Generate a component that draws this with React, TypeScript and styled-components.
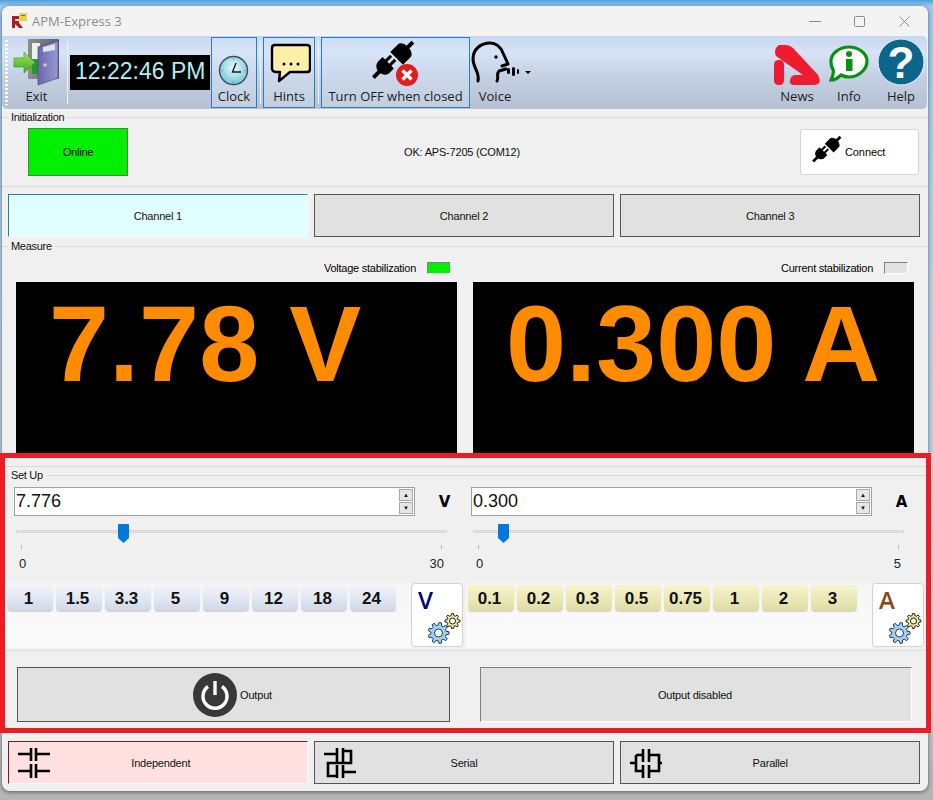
import styled, { createGlobalStyle } from 'styled-components'

const GlobalStyle = createGlobalStyle`
  html, body {
    margin: 0;
    padding: 0;
  }

  body {
    width: 933px;
    height: 800px;
    overflow: hidden;
    background: linear-gradient(180deg, #4f9fe0 0, #9cc8ea 6px, #b9d3e8 300px, #c4c8cc 700px, #b4b4b4 800px);
    font-family: 'Liberation Sans', Arial, sans-serif;
  }

  * {
    box-sizing: border-box;
  }
`

const Desktop = styled.div`
  position: relative;
  width: 933px;
  height: 800px;
  padding: 6px 0 0 2px;
`

const Window = styled.div`
  display: flex;
  flex-direction: column;
  width: 926px;
  height: 785px;
  background: #f0f0f0;
  border-radius: 8px;
  box-shadow: 0 1px 4px rgba(0, 0, 0, 0.5);
  overflow: hidden;
`

const TitleBar = styled.div`
  display: flex;
  align-items: center;
  flex: 0 0 30px;
  padding-left: 9px;
  background: #f3f3f3;
`

const AppTitle = styled.span`
  margin-left: 4px;
  font-family: 'Open Sans', sans-serif;
  font-size: 13px;
  color: #8c8c8c;
`

const WindowButtons = styled.div`
  display: flex;
  margin: 0 1px 0 auto;
`

const WindowButton = styled.div`
  display: flex;
  align-items: center;
  justify-content: center;
  width: 45px;
  height: 30px;
`

const Toolbar = styled.div`
  display: flex;
  align-items: stretch;
  flex: 0 0 73px;
  margin-right: 1px;
  padding: 1px 2px 1px 3px;
  border-radius: 0 5px 5px 5px;
  background: linear-gradient(180deg, #c6d6ef 0%, #d7e3f6 22%, #c6d0e4 55%, #b5c0d1 100%);
`

const Grip = styled.div`
  flex: 0 0 3px;
  margin: 3px 1px 3px 0;
  background: repeating-linear-gradient(180deg, #fff 0, #fff 2px, transparent 2px, transparent 4px);
`

const ToolItem = styled.div<{ $w: number; $active?: boolean }>`
  display: flex;
  flex-direction: column;
  align-items: center;
  flex: 0 0 ${(p) => p.$w}px;
  min-width: 0;
  border: 1px solid ${(p) => (p.$active ? '#2b7dbd' : 'transparent')};
  background: ${(p) => (p.$active ? 'rgba(214, 232, 250, 0.35)' : 'transparent')};
`

const ToolIcon = styled.div`
  display: flex;
  justify-content: center;
  flex: 0 0 48px;
`

const ToolLabel = styled.span`
  font-family: 'Open Sans', sans-serif;
  font-size: 13px;
  line-height: 21px;
  white-space: nowrap;
  color: #1c1c1c;
`

const VoiceLabel = styled(ToolLabel)`
  margin-right: 15px;
`

const ToolSeparator = styled.div`
  flex: 0 0 1px;
  margin: 4px 2px 4px 3px;
  background: #eef2f8;
`

const ClockDisplay = styled.div`
  align-self: flex-start;
  width: 140px;
  height: 35px;
  margin: 18px 1px 0 0;
  padding-left: 5px;
  background: #000;
  color: #aeeeee;
  font-size: 23px;
  line-height: 33px;
  white-space: nowrap;
`

const ToolbarRight = styled.div`
  display: flex;
  gap: 9px;
  margin-left: auto;
`

const Group = styled.fieldset<{ $lined?: boolean }>`
  min-width: 0;
  margin: 0;
  padding: 0;
  border: 0;
  border-top: 1px solid #d9d9d9;
  border-bottom: ${(p) => (p.$lined ? '1px solid #d9d9d9' : '0')};
`

const GroupLabel = styled.legend`
  margin-left: 6px;
  padding: 0 3px 0 3px;
  font-size: 11px;
  letter-spacing: -0.3px;
  line-height: 14px;
  color: #111;
`

const InitGroup = styled(Group)`
  margin-top: 1px;
`

const InitRow = styled.div`
  display: flex;
  align-items: center;
  height: 62px;
  padding: 4px 9px 10px 26px;
`

const OnlineBox = styled.div`
  display: flex;
  align-items: center;
  justify-content: center;
  width: 100px;
  height: 48px;
  border: 1px solid #3e8b3e;
  background: #00f000;
  font-size: 11px;
  letter-spacing: -0.2px;
`

const StatusText = styled.div`
  flex: 1;
  padding-right: 4px;
  text-align: center;
  font-size: 11px;
  letter-spacing: -0.2px;
  color: #111;
`

const ConnectButton = styled.div`
  display: flex;
  align-items: center;
  gap: 1px;
  width: 119px;
  height: 46px;
  padding-left: 7px;
  border: 1px solid #d4d4d4;
  border-radius: 3px;
  background: #fff;
  font-size: 11px;
  letter-spacing: -0.1px;
`

const ModeRow = styled.div<{ $top: number }>`
  display: grid;
  grid-template-columns: repeat(3, 1fr);
  gap: 6.5px;
  height: 43px;
  margin: ${(p) => p.$top}px 8px 0 6px;
`

const ModeButton = styled.div<{ $on?: string; $edge?: string; $shift?: number }>`
  position: relative;
  display: flex;
  align-items: center;
  justify-content: center;
  padding-left: ${(p) => p.$shift ?? 0}px;
  border: 1px solid #555;
  background: #e1e1e1;
  font-size: 11px;
  letter-spacing: -0.2px;
  color: #111;

  ${(p) =>
    p.$on &&
    `
    background: ${p.$on};
    border-color: ${p.$edge} #f8f8f8 #f8f8f8 ${p.$edge};
  `}
`

const ModeIcon = styled.svg`
  position: absolute;
  left: 6px;
  top: 2px;
`

const MeasureGroup = styled(Group)`
  margin-top: 2px;
`

const MeasureGrid = styled.div`
  display: grid;
  grid-template-columns: repeat(2, 441px);
  gap: 16px;
  padding: 0 0 10px 14px;
  border-bottom: 1px solid #d9d9d9;
`

const StabRow = styled.div`
  display: flex;
  align-items: center;
  justify-content: flex-end;
  gap: 11px;
  height: 29px;
  padding: 1px 6px 0 0;
  font-size: 11px;
  letter-spacing: -0.25px;
`

const StabLamp = styled.div<{ $on?: boolean }>`
  width: 24px;
  height: 12px;
  border: 1px solid;
  border-color: #808080 #fff #fff #808080;
  background: ${(p) => (p.$on ? '#00f000' : '#e1e1e1')};
`

const Readout = styled.div`
  height: 174px;
  padding: 2px 0 0 33px;
  background: #000;
  color: #ff8c00;
  font-size: 108px;
  font-weight: 700;
  line-height: 120px;
  white-space: nowrap;
`

const SetupGroup = styled(Group)`
  margin-top: 1px;
`

const SetupGrid = styled.div`
  display: grid;
  grid-template-columns: repeat(2, 457px);
  padding-left: 12px;
`

const SetupColumn = styled.div`
  padding-top: 5px;
`

const InputRow = styled.div`
  display: flex;
  align-items: center;
`

const NumberInput = styled.div`
  display: flex;
  align-items: center;
  justify-content: space-between;
  flex: 0 0 401px;
  height: 29px;
  padding: 0 1px 0 1px;
  border: 1px solid #a0a0a0;
  background: #fff;
  font-size: 18px;
  color: #111;
`

const Spinner = styled.div`
  display: flex;
  flex-direction: column;
  gap: 1px;
  width: 14px;
`

const SpinButton = styled.div`
  display: flex;
  align-items: center;
  justify-content: center;
  height: 12px;
  border: 1px solid #a8a8a8;
  background: #e6e6e6;
  font-size: 6px;
  line-height: 1;
  color: #111;
`

const UnitLabel = styled.span`
  flex: 0 0 56px;
  padding-left: 3px;
  text-align: center;
  font-family: 'DejaVu Sans', sans-serif;
  font-size: 15px;
  font-weight: 700;
`

const SliderBlock = styled.div`
  position: relative;
  width: 431px;
  height: 67px;
  margin-left: 2px;
`

const SliderTrack = styled.div`
  position: absolute;
  top: 14px;
  left: 0;
  right: 0;
  height: 3px;
  background: #e4e4e4;
  border: 1px solid #d8d8d8;
`

const SliderThumb = styled.svg<{ $left: number }>`
  position: absolute;
  top: 8px;
  left: ${(p) => p.$left}px;
`

const SliderTicks = styled.div`
  display: flex;
  justify-content: space-between;
  padding: 29px 5px 0 5px;
`

const Tick = styled.div`
  width: 1px;
  height: 4px;
  background: #b8b8b8;
`

const SliderScale = styled.div`
  display: flex;
  justify-content: space-between;
  margin-top: 7px;
  padding: 0 3px 0 3px;
  font-size: 13px;
  line-height: 15px;
  color: #222;
`

const PresetGrid = styled.div`
  display: grid;
  grid-template-columns: repeat(2, 458px);
  gap: 3px;
  padding-left: 3px;
`

const PresetCell = styled.div`
  display: flex;
  height: 65px;
`

const PresetStrip = styled.div`
  display: flex;
  align-items: flex-start;
  gap: 3px;
  flex: 1;
  padding: 2px 0 0 2px;
  background: linear-gradient(180deg, #f6f6f6, #fafafa);
`

const PresetButton = styled.div<{ $amber?: boolean }>`
  display: flex;
  align-items: center;
  justify-content: center;
  width: 46px;
  height: 26px;
  padding: 1px 3px 0 0;
  border-radius: 4px;
  background: ${(p) =>
    p.$amber
      ? 'linear-gradient(180deg, #f6f4cc 0%, #e9e7b4 60%, #dcdba2 100%)'
      : 'linear-gradient(180deg, #f1f4f9 0%, #dfe5f0 60%, #ced7e6 100%)'};
  box-shadow: 0 1px 1px #d0d0d0;
  font-size: 17px;
  font-weight: 700;
  color: #111;
`

const UnitSettings = styled.div`
  display: flex;
  flex-direction: column;
  flex: 0 0 52px;
  height: 64px;
  padding: 1px 0 0 6px;
  border: 1px solid #d2d2d2;
  border-radius: 4px;
  background: #fff;
`

const UnitLetter = styled.span<{ $color: string }>`
  font-family: 'Open Sans', sans-serif;
  font-size: 24px;
  font-weight: 600;
  line-height: 30px;
  color: ${(p) => p.$color};
`

const UnitGears = styled.svg`
  margin: -3px 0 0 10px;
`

const OutputRow = styled.div`
  display: grid;
  grid-template-columns: 433px 432px;
  gap: 30px;
  margin-top: 2px;
  padding: 16px 0 0 15px;
  border-top: 1px solid #dedede;
`

const OutputButton = styled.div`
  display: flex;
  align-items: center;
  justify-content: center;
  gap: 3px;
  height: 55px;
  padding-right: 2px;
  border: 1px solid #555;
  background: #e1e1e1;
  font-size: 11px;
  letter-spacing: -0.2px;
  color: #111;
`

const OutputState = styled(OutputButton)`
  border-color: #808080 #fff #fff #808080;
`

// red annotation frame that lies over the window
const Highlight = styled.div`
  position: absolute;
  left: 0;
  top: 453px;
  width: 931px;
  height: 280px;
  border: 5px solid #ed1c24;
  pointer-events: none;
`

// builds a cog outline around cx, cy
const gearPath = (cx: number, cy: number, r: number, teeth: number) => {
  const inner = r * 0.74
  const step = (Math.PI * 2) / teeth
  let d = ''
  for (let i = 0; i < teeth; i++) {
    const a = i * step
    const pts = [
      [inner, a - step * 0.32],
      [r, a - step * 0.17],
      [r, a + step * 0.17],
      [inner, a + step * 0.32],
    ]
    pts.forEach(([rad, ang], j) => {
      const x = (cx + rad * Math.cos(ang)).toFixed(2)
      const y = (cy + rad * Math.sin(ang)).toFixed(2)
      d += `${i === 0 && j === 0 ? 'M' : 'L'}${x} ${y} `
    })
  }
  return d + 'Z'
}

const Gears = () => (
  <UnitGears width="34" height="34" viewBox="0 0 34 34">
    <path d={gearPath(24.5, 9, 7.5, 8)} fill="#efe69c" stroke="#222" strokeWidth="1" />
    <circle cx="24.5" cy="9" r="3" fill="#fff" stroke="#222" strokeWidth="1" />
    <path d={gearPath(10.5, 21, 10.5, 9)} fill="#9fd0f2" stroke="#1d3c5c" strokeWidth="1" />
    <circle cx="10.5" cy="21" r="4" fill="#fff" stroke="#1d3c5c" strokeWidth="1" />
  </UnitGears>
)

const PlugPair = () => (
  <>
    <g transform="translate(383 67) rotate(45)">
      <rect x="-4.4" y="-13" width="3" height="8" fill="#000" />
      <rect x="1.4" y="-13" width="3" height="8" fill="#000" />
      <path d="M-8-6H8V0C8 5 3 7 2 7V15H-2V7C-3 7-8 5-8 0Z" fill="#000" />
    </g>
    <g transform="translate(402 52) rotate(45)">
      <path d="M-9 9H9V-2C9-5 4-7 2-7V-14H-2V-7C-4-7-9-5-9-2Z" fill="#000" />
    </g>
  </>
)

const ExitIcon = () => (
  <svg width="54" height="48" viewBox="10 38 54 48">
    <defs>
      <linearGradient id="doorFrame" x1="0" x2="1">
        <stop offset="0" stopColor="#8d8d8d" />
        <stop offset="1" stopColor="#5f6168" />
      </linearGradient>
      <linearGradient id="door" x1="0" x2="1">
        <stop offset="0" stopColor="#6a68ad" />
        <stop offset="1" stopColor="#9a98d0" />
      </linearGradient>
      <linearGradient id="arrowFill" x1="0" y1="0" x2="0" y2="1">
        <stop offset="0" stopColor="#a6ea5a" />
        <stop offset="1" stopColor="#3fa326" />
      </linearGradient>
    </defs>
    <rect x="28" y="39" width="31" height="40" rx="1" fill="url(#doorFrame)" />
    <rect x="32" y="43" width="8" height="16" fill="#e8f4ee" />
    <rect x="32" y="59" width="8" height="15" fill="#1f9a2c" />
    <polygon points="38,47 58,41 58,78 38,85" fill="url(#door)" stroke="#4a4880" strokeWidth="0.7" />
    <polygon points="43,47 55,44 55,50 43,52" fill="#dfe3f6" />
    <circle cx="45" cy="65" r="1.8" fill="#c8c8c8" />
    <polygon
      points="14,58 24,58 24,52 35,62.5 24,73 24,67 14,67"
      fill="url(#arrowFill)"
      stroke="#4f9a2a"
      strokeWidth="0.7"
    />
  </svg>
)

const ClockIcon = () => (
  <svg width="38" height="48" viewBox="215 38 38 48">
    <defs>
      <radialGradient id="clockFace" cx="0.5" cy="0.4" r="0.7">
        <stop offset="0" stopColor="#e8fbfb" />
        <stop offset="1" stopColor="#5fbdd0" />
      </radialGradient>
    </defs>
    <circle cx="233.5" cy="70.5" r="14" fill="url(#clockFace)" stroke="#33505c" strokeWidth="1.4" />
    <path d="M236 63 L232.5 72 L241 72" fill="none" stroke="#1a1a1a" strokeWidth="1.4" />
    <circle cx="233.5" cy="59" r="0.8" fill="#d07070" />
    <circle cx="233.5" cy="82" r="0.8" fill="#d07070" />
    <circle cx="222" cy="70.5" r="0.8" fill="#d07070" />
    <circle cx="245" cy="70.5" r="0.8" fill="#d07070" />
  </svg>
)

const HintsIcon = () => (
  <svg width="44" height="48" viewBox="267 38 44 48">
    <path
      d="M275 45H307Q310 45 310 48V69Q310 72 307 72H290L279 81L280 72H276Q272 72 272 68V48Q272 45 275 45Z"
      fill="#fdf0a6"
      stroke="#000"
      strokeWidth="2.4"
      strokeLinejoin="round"
    />
    <circle cx="284" cy="64" r="1.5" fill="#000" />
    <circle cx="291" cy="64" r="1.5" fill="#000" />
    <circle cx="298" cy="64" r="1.5" fill="#000" />
  </svg>
)

const TurnOffIcon = () => (
  <svg width="60" height="48" viewBox="365 38 60 48">
    <PlugPair />
    <circle cx="406" cy="75" r="11" fill="#e21b1b" />
    <path d="M401.5 70.5L410.5 79.5M410.5 70.5L401.5 79.5" stroke="#fff" strokeWidth="3.4" />
  </svg>
)

const VoiceIcon = () => (
  <svg width="63" height="48" viewBox="471 38 63 48">
    <g fill="none" stroke="#000" strokeWidth="3" strokeLinecap="round" strokeLinejoin="round">
      <path d="M478 81C480 72 473 68 473 59C473 49 481 43 490 43C497 43 501 48 503 53L508 64L502 66" />
      <path d="M506 69L499 71C496 74 499 77 497 81" />
    </g>
    <circle cx="496" cy="57" r="1.7" fill="#000" />
    <rect x="507" y="68" width="3" height="6" rx="1.5" fill="#000" />
    <rect x="512" y="67" width="3" height="9" rx="1.5" fill="#000" />
    <rect x="517" y="69" width="2" height="5" rx="1" fill="#000" />
    <polygon points="525,71 531,71 528,74" fill="#000" />
  </svg>
)

const NewsIcon = () => (
  <svg width="48" height="48" viewBox="773 38 48 48">
    <path
      d="M779 45H786Q790 45 793 48L818 75Q823 85 814 85H794Q789 85 790 80Q791 75 796 75H803L776 56Q773 49 779 45Z"
      fill="#ee1c2e"
    />
    <rect x="774" y="60" width="10" height="25" rx="4.5" fill="#ee1c2e" />
  </svg>
)

const InfoIcon = () => (
  <svg width="40" height="48" viewBox="829 38 40 48">
    <path
      d="M849 47C858 47 867 53 867 61C867 70 858 77 849 77C845 77 843 76 841 75C838 78 835 80 831 80C833 76 834 72 833 69C831 67 831 64 831 61C831 53 840 47 849 47Z"
      fill="#fff"
      stroke="#0a8f12"
      strokeWidth="3.2"
    />
    <circle cx="849" cy="54" r="3" fill="#0a8f12" />
    <rect x="846" y="59" width="6.5" height="12" fill="#0a8f12" />
  </svg>
)

const HelpIcon = () => (
  <svg width="48" height="48" viewBox="877 39 48 48">
    <circle cx="901" cy="63" r="23" fill="#0b668c" stroke="#e8eef4" strokeWidth="1" />
    <text x="901" y="79" textAnchor="middle" fontFamily="Liberation Sans" fontWeight="700" fontSize="44" fill="#fff">
      ?
    </text>
  </svg>
)

const AppIcon = () => (
  <svg width="17" height="16" viewBox="0 0 17 16">
    <rect x="8" y="0" width="8" height="8" fill="#e8d24a" />
    <rect x="10" y="2" width="4" height="1" fill="#4a7a3a" />
    <path d="M1 3H8V6H4V8H8V10L12 15H8L4 11V15H1Z" fill="#b01c20" />
  </svg>
)

const IndependentIcon = () => (
  <ModeIcon width="44" height="36" viewBox="15 744 44 36">
    <path
      d="M18 754H31M31 748V761M36 748V761M36 754H50M18 771H31M31 764V778M36 764V778M36 771H50"
      fill="none"
      stroke="#000"
      strokeWidth="2.6"
    />
  </ModeIcon>
)

const SerialIcon = () => (
  <ModeIcon width="44" height="36" viewBox="321 744 44 36">
    <path
      d="M324 754H337M337 748V762M343 748V762M343 751H351V763H328V776H337M337 765V778M343 765V778M343 772H356"
      fill="none"
      stroke="#000"
      strokeWidth="2.6"
    />
  </ModeIcon>
)

const ParallelIcon = () => (
  <ModeIcon width="44" height="36" viewBox="627 744 44 36">
    <path
      d="M630 763H636M636 755V771H643M636 755H643M643 749V762M643 765V778M649 749V762M649 765V778M649 755H659V771H649M659 763H662"
      fill="none"
      stroke="#000"
      strokeWidth="2.6"
    />
  </ModeIcon>
)

const voltPresets = ['1', '1.5', '3.3', '5', '9', '12', '18', '24']
const ampPresets = ['0.1', '0.2', '0.3', '0.5', '0.75', '1', '2', '3']

const SetupChannel = ({
  value,
  unit,
  max,
  thumbLeft,
}: {
  value: string
  unit: string
  max: string
  thumbLeft: number
}) => (
  <SetupColumn>
    <InputRow>
      <NumberInput>
        {value}
        <Spinner>
          <SpinButton>▲</SpinButton>
          <SpinButton>▼</SpinButton>
        </Spinner>
      </NumberInput>
      <UnitLabel>{unit}</UnitLabel>
    </InputRow>
    <SliderBlock>
      <SliderTrack />
      <SliderThumb width="11" height="19" viewBox="0 0 11 19" $left={thumbLeft}>
        <path d="M1 0H10Q11 0 11 1V14L5.5 19L0 14V1Q0 0 1 0Z" fill="#0078d7" />
      </SliderThumb>
      <SliderTicks>
        <Tick />
        <Tick />
      </SliderTicks>
      <SliderScale>
        <span>0</span>
        <span>{max}</span>
      </SliderScale>
    </SliderBlock>
  </SetupColumn>
)

export default function App() {
  return (
    <>
      <GlobalStyle />
      <Desktop>
        <Window>
          <TitleBar>
            <AppIcon />
            <AppTitle>APM-Express 3</AppTitle>
            <WindowButtons>
              <WindowButton>
                <svg width="12" height="12" viewBox="0 0 12 12">
                  <path d="M0 6.5H12" stroke="#8a8a8a" />
                </svg>
              </WindowButton>
              <WindowButton>
                <svg width="11" height="11" viewBox="0 0 11 11">
                  <rect x="0.5" y="0.5" width="10" height="10" rx="1" fill="none" stroke="#8a8a8a" />
                </svg>
              </WindowButton>
              <WindowButton>
                <svg width="11" height="11" viewBox="0 0 11 11">
                  <path d="M0.5 0.5L10.5 10.5M10.5 0.5L0.5 10.5" stroke="#8a8a8a" />
                </svg>
              </WindowButton>
            </WindowButtons>
          </TitleBar>

          <Toolbar>
            <Grip />
            <ToolItem $w={55}>
              <ToolIcon>
                <ExitIcon />
              </ToolIcon>
              <ToolLabel>Exit</ToolLabel>
            </ToolItem>
            <ToolSeparator />
            <ClockDisplay>12:22:46 PM</ClockDisplay>
            <ToolItem $w={46} $active>
              <ToolIcon>
                <ClockIcon />
              </ToolIcon>
              <ToolLabel>Clock</ToolLabel>
            </ToolItem>
            <ToolSeparator />
            <ToolItem $w={52} $active>
              <ToolIcon>
                <HintsIcon />
              </ToolIcon>
              <ToolLabel>Hints</ToolLabel>
            </ToolItem>
            <ToolSeparator />
            <ToolItem $w={149} $active>
              <ToolIcon>
                <TurnOffIcon />
              </ToolIcon>
              <ToolLabel>Turn OFF when closed</ToolLabel>
            </ToolItem>
            <ToolItem $w={65}>
              <ToolIcon>
                <VoiceIcon />
              </ToolIcon>
              <VoiceLabel>Voice</VoiceLabel>
            </ToolItem>
            <ToolbarRight>
              <ToolItem $w={48}>
                <ToolIcon>
                  <NewsIcon />
                </ToolIcon>
                <ToolLabel>News</ToolLabel>
              </ToolItem>
              <ToolItem $w={38}>
                <ToolIcon>
                  <InfoIcon />
                </ToolIcon>
                <ToolLabel>Info</ToolLabel>
              </ToolItem>
              <ToolItem $w={48}>
                <ToolIcon>
                  <HelpIcon />
                </ToolIcon>
                <ToolLabel>Help</ToolLabel>
              </ToolItem>
            </ToolbarRight>
          </Toolbar>

          <InitGroup $lined>
            <GroupLabel>Initialization</GroupLabel>
            <InitRow>
              <OnlineBox>Online</OnlineBox>
              <StatusText>OK: APS-7205 (COM12)</StatusText>
              <ConnectButton>
                <svg width="36" height="36" viewBox="365 38 52 52">
                  <PlugPair />
                </svg>
                Connect
              </ConnectButton>
            </InitRow>
          </InitGroup>

          <ModeRow $top={7}>
            <ModeButton $on="#e0ffff" $edge="#2f7f8f">
              Channel 1
            </ModeButton>
            <ModeButton>Channel 2</ModeButton>
            <ModeButton>Channel 3</ModeButton>
          </ModeRow>

          <MeasureGroup>
            <GroupLabel>Measure</GroupLabel>
            <MeasureGrid>
              <div>
                <StabRow>
                  Voltage stabilization
                  <StabLamp $on />
                </StabRow>
                <Readout>7.78 V</Readout>
              </div>
              <div>
                <StabRow>
                  Current stabilization
                  <StabLamp />
                </StabRow>
                <Readout>0.300 A</Readout>
              </div>
            </MeasureGrid>
          </MeasureGroup>

          <SetupGroup>
            <GroupLabel>Set Up</GroupLabel>
            <SetupGrid>
              <SetupChannel value="7.776" unit="V" max="30" thumbLeft={102} />
              <SetupChannel value="0.300" unit="A" max="5" thumbLeft={25} />
            </SetupGrid>
            <PresetGrid>
              <PresetCell>
                <PresetStrip>
                  {voltPresets.map((v) => (
                    <PresetButton key={v}>{v}</PresetButton>
                  ))}
                </PresetStrip>
                <UnitSettings>
                  <UnitLetter $color="#000080">V</UnitLetter>
                  <Gears />
                </UnitSettings>
              </PresetCell>
              <PresetCell>
                <PresetStrip>
                  {ampPresets.map((v) => (
                    <PresetButton key={v} $amber>
                      {v}
                    </PresetButton>
                  ))}
                </PresetStrip>
                <UnitSettings>
                  <UnitLetter $color="#8b4513">A</UnitLetter>
                  <Gears />
                </UnitSettings>
              </PresetCell>
            </PresetGrid>
            <OutputRow>
              <OutputButton>
                <svg width="44" height="44" viewBox="0 0 44 44">
                  <circle cx="22" cy="22" r="22" fill="#383838" />
                  <path d="M15 13.5A12 12 0 1 0 29 13.5" fill="none" stroke="#fff" strokeWidth="3.4" />
                  <path d="M22 8V22" stroke="#fff" strokeWidth="3.4" />
                </svg>
                Output
              </OutputButton>
              <OutputState>Output disabled</OutputState>
            </OutputRow>
          </SetupGroup>

          <ModeRow $top={19}>
            <ModeButton $on="#ffe0e0" $edge="#7a1c1c" $shift={6}>
              <IndependentIcon />
              Independent
            </ModeButton>
            <ModeButton>
              <SerialIcon />
              Serial
            </ModeButton>
            <ModeButton>
              <ParallelIcon />
              Parallel
            </ModeButton>
          </ModeRow>
        </Window>
        <Highlight />
      </Desktop>
    </>
  )
}
